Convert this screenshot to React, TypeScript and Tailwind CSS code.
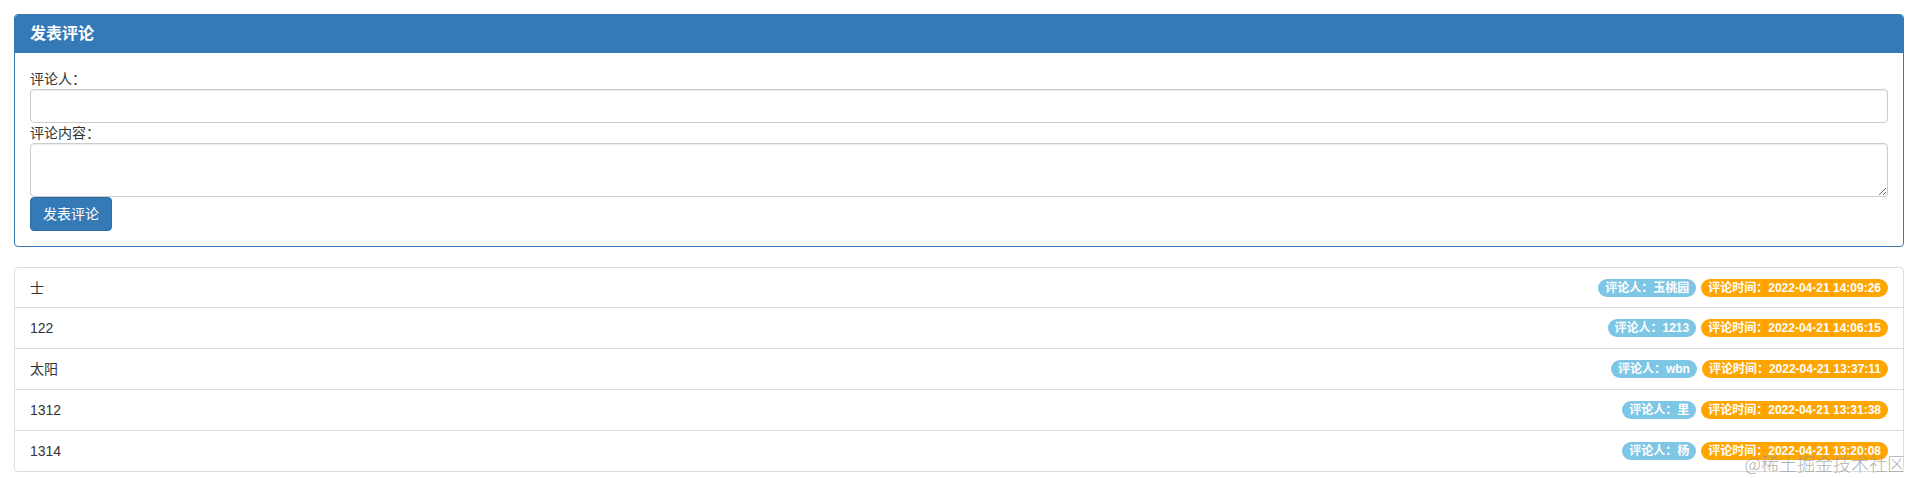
import React from 'react';

const comments = [
  { content: '士', user: '玉桃园', time: '2022-04-21 14:09:26' },
  { content: '122', user: '1213', time: '2022-04-21 14:06:15' },
  { content: '太阳', user: 'wbn', time: '2022-04-21 13:37:11' },
  { content: '1312', user: '里', time: '2022-04-21 13:31:38' },
  { content: '1314', user: '杨', time: '2022-04-21 13:20:08' },
];

const font = "font-['Liberation_Sans','Noto_Sans_CJK_SC',sans-serif]";

export default function App() {
  return (
    <div className={`relative min-h-[478px] bg-white pt-[14px] pl-[14px] pr-[9px] text-[14px] leading-[20px] text-[#333] ${font}`}>
      {/* 发表评论 */}
      <div className="mb-[20px] rounded-[4px] border border-[#337ab7]">
        <div className="rounded-t-[3px] bg-[#337ab7] px-[15px] py-[10px] text-[16px] leading-[18px] font-bold text-white">
          发表评论
        </div>
        <div className="flex flex-col px-[15px] pt-[16px] pb-[15px]">
          <label className="h-[20px]">评论人：</label>
          <input
            type="text"
            className="h-[34px] rounded-[4px] border border-[#ccc] px-[12px] py-[6px] shadow-[inset_0_1px_1px_rgba(0,0,0,0.075)] outline-none"
          />
          <label className="h-[20px]">评论内容：</label>
          <textarea
            rows={2}
            className="h-[54px] rounded-[4px] border border-[#ccc] px-[12px] py-[6px] shadow-[inset_0_1px_1px_rgba(0,0,0,0.075)] outline-none"
          />
          <div>
            <button className="h-[34px] w-[82px] rounded-[4px] border border-[#2e6da4] bg-[#337ab7] text-[14px] text-white">
              发表评论
            </button>
          </div>
        </div>
      </div>

      {/* 评论列表 */}
      <ul className="flex flex-col">
        {comments.map((c, i) => (
          <li
            key={i}
            className={`-mt-px flex items-center border border-[#ddd] px-[15px] first:mt-0 first:rounded-t-[4px] last:rounded-b-[4px] ${i === 0 ? 'h-[41px]' : 'h-[42px]'}`}
          >
            <span className="flex-1">{c.content}</span>
            <span className="flex gap-[5px] text-[12px] leading-[12px] font-bold text-white">
              <span className="rounded-[10px] bg-[#7ec6e5] px-[7px] py-[3px]">评论人：{c.user}</span>
              <span className="rounded-[10px] bg-[#ffa500] px-[7px] py-[3px]">评论时间：{c.time}</span>
            </span>
          </li>
        ))}
      </ul>

      <div className="pointer-events-none absolute right-[8px] bottom-[5px] font-['Noto_Sans_CJK_SC',sans-serif] text-[18px] leading-[20px] font-light text-[#9a9a9a]/80">
        @稀土掘金技术社区
      </div>
    </div>
  );
}
